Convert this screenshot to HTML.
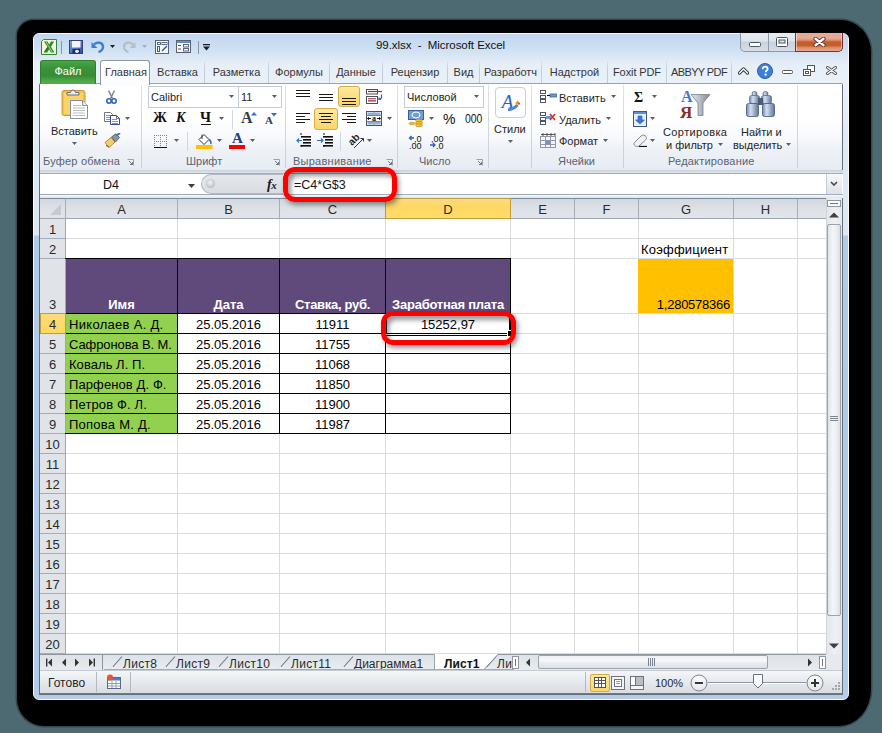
<!DOCTYPE html>
<html><head><meta charset="utf-8">
<style>
*{margin:0;padding:0;box-sizing:border-box}
html,body{width:882px;height:733px;overflow:hidden}
body{background:#4d6a72;position:relative;font-family:"Liberation Sans",sans-serif;color:#1e1e1e}
.a{position:absolute;display:block}
.t{position:absolute;white-space:nowrap;line-height:1}
</style></head><body>
<div class="a" style="left:17px;top:20px;width:854px;height:706px;background:#000;border-radius:16px 30px 32px 27px / 16px 32px 37px 27px;box-shadow:0 0 0 1.5px rgba(0,0,0,.3)"></div>
<div class="a" style="left:33px;top:33px;width:816px;height:667px;border-radius:6px;background:linear-gradient(180deg,#c3d6ee 0px,#cddff2 14px,#d9e6f4 22px,#e6eef8 30px,#eaf1f9 51px,#dfe9f4 120px,#dde8f3 201px,#afcbe8 202px,#b3cde9 100%);border:1px solid #f4f8fc"></div>
<div class="t" style="left:376px;top:40px;font-size:11.5px;color:#111;letter-spacing:-0.05px">99.xlsx&nbsp; -&nbsp; Microsoft Excel</div>
<svg class="a" style="left:41px;top:39px;" width="16" height="16" viewBox="0 0 16 16"><path d="M2.5 0.5H15.5V15.5H0.5V2.5Z" fill="#f6f2d2" stroke="#2c8a34"/><rect x="9" y="2" width="5.5" height="12" fill="#fbfbf4"/><path d="M3 2.5h3.6l1.6 3 1.7-3h3.3l-3.2 5.3 3.4 5.7H9.8L8.1 10.3 6.2 13.5H2.8l3.6-5.7z" fill="#2d8a2f"/><path d="M5.2 3.2l5.8 9.6" stroke="#8fd46a" stroke-width="1.1"/><path d="M3.6 13l3-4.6" stroke="#1d5e22" stroke-width=".8"/></svg>
<div class="a" style="left:61px;top:41px;width:1px;height:13px;background:#8a96a6"></div>
<svg class="a" style="left:69px;top:40px;" width="14" height="14" viewBox="0 0 14 14"><defs><linearGradient id="sv" x1="0" y1="0" x2="1" y2="1"><stop offset="0" stop-color="#7aa6e8"/><stop offset="1" stop-color="#2a4a9c"/></linearGradient></defs><rect x="0.5" y="0.5" width="13" height="13" fill="url(#sv)" stroke="#3a3f78"/><rect x="3" y="1" width="8.5" height="6.5" fill="#f2f5f9"/><rect x="3.5" y="9" width="7.5" height="4.5" fill="#202c5a"/><ellipse cx="8" cy="11.3" rx="2" ry="1.6" fill="#e8ecf2"/></svg>
<svg class="a" style="left:91px;top:40px;" width="14" height="13" viewBox="0 0 14 13"><path d="M3 4.5C6 1.5 11.5 2 12 6.5 12.3 9.5 9.5 11.5 7.5 12" fill="none" stroke="#3b7fd0" stroke-width="2.4"/><path d="M0.5 2v6h6z" fill="#3b7fd0"/></svg>
<svg class="a" style="left:110px;top:45px;" width="5" height="3" viewBox="0 0 5 3"><path d="M0 0H5L2.5 3Z" fill="#1e1e1e"/></svg>
<svg class="a" style="left:123px;top:40px;" width="13" height="13" viewBox="0 0 13 13"><path d="M10 4.5C7 1.5 1.5 2 1 6.5 .7 9.5 3.5 11.5 5.5 12" fill="none" stroke="#b9bec6" stroke-width="2.4"/><path d="M12.5 2v6h-6z" fill="#b9bec6"/></svg>
<svg class="a" style="left:142px;top:45px;" width="5" height="3" viewBox="0 0 5 3"><path d="M0 0H5L2.5 3Z" fill="#a9aeb6"/></svg>
<svg class="a" style="left:155px;top:40px;" width="14" height="14" viewBox="0 0 14 14"><rect x="0.5" y="0.5" width="13" height="13" fill="#f7f8fa" stroke="#5a6170"/><rect x="2.5" y="2.5" width="3" height="2" fill="none" stroke="#5b6a82"/><rect x="7" y="2.5" width="5" height="2" fill="none" stroke="#5b6a82"/><rect x="2.5" y="6.5" width="2" height="5" fill="none" stroke="#3e5e9e"/><path d="M7 11l5-5" stroke="#2a5db0" stroke-width="1.4"/></svg>
<svg class="a" style="left:176px;top:40px;" width="15" height="13" viewBox="0 0 15 13"><rect x="0.5" y="0.5" width="14" height="12" fill="#f7f8fa" stroke="#5a6170"/><rect x="1" y="1" width="13" height="2" fill="#5f8fd8"/><path d="M2 5.5h3M2 9h3" stroke="#8a3a4a"/><rect x="7.5" y="4.5" width="5" height="2.5" fill="none" stroke="#5b6a82"/><rect x="7.5" y="8.5" width="5" height="2.5" fill="none" stroke="#5b6a82"/></svg>
<div class="a" style="left:198px;top:41px;width:1px;height:13px;background:#8a96a6"></div>
<svg class="a" style="left:203px;top:44px;" width="7" height="7" viewBox="0 0 7 7"><rect x="0" y="0" width="7" height="1.3" fill="#1e1e1e"/><path d="M0 2.5H7L3.5 6.5Z" fill="#1e1e1e"/></svg>
<div class="a" style="left:740px;top:33px;width:103px;height:19px;border:1px solid #8b9aac;border-top:none;border-radius:0 0 5px 5px;background:linear-gradient(180deg,#e6ecf3 0%,#dde4ec 45%,#c9d2dc 50%,#d6dde6 100%);overflow:hidden"></div>
<div class="a" style="left:768px;top:33px;width:1px;height:18px;background:#8b9aac"></div>
<div class="a" style="left:795px;top:33px;width:48px;height:19px;border:1px solid #7e2e34;border-top:none;border-radius:0 0 5px 0;background:linear-gradient(180deg,#e8ac9c 0%,#e6a692 30%,#d9906e 40%,#c65a2c 50%,#c4602e 70%,#d88a66 80%,#e6aa92 100%);box-shadow:inset 1px 0 0 rgba(255,255,255,.5),inset -1px 0 0 rgba(255,255,255,.4)"></div>
<svg class="a" style="left:749px;top:42px;" width="12" height="5" viewBox="0 0 12 5"><rect x="0.5" y="0.5" width="11" height="4" rx="1" fill="#fff" stroke="#4b5563"/></svg>
<svg class="a" style="left:776px;top:37px;" width="12" height="10" viewBox="0 0 12 10"><rect x="0.5" y="0.5" width="11" height="9" rx="1" fill="#fff" stroke="#4b5563"/><rect x="3" y="3" width="6" height="3" fill="#dfe4ea" stroke="#4b5563" stroke-width="1"/></svg>
<svg class="a" style="left:813px;top:37px;" width="13" height="10" viewBox="0 0 13 10"><path d="M2.5 1.8L10.5 8.2M10.5 1.8L2.5 8.2" stroke="#5a3028" stroke-width="4.2" stroke-linecap="round"/><path d="M2.5 1.8L10.5 8.2M10.5 1.8L2.5 8.2" stroke="#fff" stroke-width="2.4" stroke-linecap="round"/></svg>
<svg class="a" style="left:738px;top:67px;" width="11" height="8" viewBox="0 0 11 8"><path d="M1.5 6L5.5 2 9.5 6" fill="none" stroke="#3a3f46" stroke-width="3.2" stroke-linejoin="round" stroke-linecap="round"/><path d="M1.5 6L5.5 2 9.5 6" fill="none" stroke="#fff" stroke-width="1.3" stroke-linejoin="round" stroke-linecap="round"/></svg>
<svg class="a" style="left:757px;top:63px;" width="16" height="16" viewBox="0 0 16 16"><circle cx="8" cy="8" r="7.5" fill="#3d7fd4"/><circle cx="8" cy="8" r="7.5" fill="none" stroke="#2a62b0" stroke-width="1"/><path d="M5.6 6.2C5.6 4.6 6.7 3.7 8.1 3.7 9.6 3.7 10.6 4.6 10.6 5.9 10.6 7.4 8.6 7.6 8.6 9.3" fill="none" stroke="#fff" stroke-width="1.8"/><rect x="7.6" y="10.6" width="2" height="2" fill="#fff"/></svg>
<svg class="a" style="left:782px;top:70px;" width="11" height="4" viewBox="0 0 11 4"><rect x="0.5" y="0.5" width="10" height="3" rx="1" fill="#fff" stroke="#555"/></svg>
<svg class="a" style="left:803px;top:65px;" width="12" height="11" viewBox="0 0 12 11"><rect x="4.5" y="0.5" width="7" height="6" fill="#fff" stroke="#555"/><rect x="0.5" y="4.5" width="7" height="6" fill="#fff" stroke="#555"/><rect x="2.5" y="6.5" width="3" height="2" fill="none" stroke="#555"/></svg>
<svg class="a" style="left:826px;top:66px;" width="11" height="9" viewBox="0 0 11 9"><path d="M1.5 1.5L9.5 7.5M9.5 1.5L1.5 7.5" stroke="#555" stroke-width="3" stroke-linecap="round"/><path d="M1.5 1.5L9.5 7.5M9.5 1.5L1.5 7.5" stroke="#fff" stroke-width="1.2" stroke-linecap="round"/></svg>
<div class="a" style="left:39px;top:83px;width:804px;height:612px;border:1px solid #666e7a;border-top-color:#9aa3ae;border-radius:2px 2px 0 0;background:#e6ebf1"></div>
<div class="a" style="left:40px;top:84px;width:802px;height:85px;background:linear-gradient(180deg,#ffffff 0px,#ffffff 34px,#f6f8fb 56px,#eef2f7 64px,#e8edf4 84px)"></div>
<div class="a" style="left:141px;top:85px;width:1px;height:83px;background:linear-gradient(180deg,#dfe4ea,#cfd6de 50%,#c9d0d9)"></div>
<div class="a" style="left:285px;top:85px;width:1px;height:83px;background:linear-gradient(180deg,#dfe4ea,#cfd6de 50%,#c9d0d9)"></div>
<div class="a" style="left:397px;top:85px;width:1px;height:83px;background:linear-gradient(180deg,#dfe4ea,#cfd6de 50%,#c9d0d9)"></div>
<div class="a" style="left:488px;top:85px;width:1px;height:83px;background:linear-gradient(180deg,#dfe4ea,#cfd6de 50%,#c9d0d9)"></div>
<div class="a" style="left:531px;top:85px;width:1px;height:83px;background:linear-gradient(180deg,#dfe4ea,#cfd6de 50%,#c9d0d9)"></div>
<div class="a" style="left:623px;top:85px;width:1px;height:83px;background:linear-gradient(180deg,#dfe4ea,#cfd6de 50%,#c9d0d9)"></div>
<div class="a" style="left:797px;top:85px;width:1px;height:83px;background:linear-gradient(180deg,#dfe4ea,#cfd6de 50%,#c9d0d9)"></div>
<div class="t" style="left:43px;top:156px;font-size:11px;color:#5c5f72;letter-spacing:0.2px">Буфер обмена</div>
<div class="t" style="left:186px;top:156px;font-size:11px;color:#5c5f72">Шрифт</div>
<div class="t" style="left:293px;top:156px;font-size:11px;color:#5c5f72;letter-spacing:0.25px">Выравнивание</div>
<div class="t" style="left:419px;top:156px;font-size:11px;color:#5c5f72">Число</div>
<div class="t" style="left:558px;top:156px;font-size:11px;color:#5c5f72">Ячейки</div>
<div class="t" style="left:668px;top:156px;font-size:11px;color:#5c5f72;letter-spacing:0.2px">Редактирование</div>
<svg class="a" style="left:127px;top:159px;" width="7" height="7" viewBox="0 0 7 7"><path d="M0.5 0.5H6.5V6.5" fill="none" stroke="#98a2ae"/><path d="M0.5 0.5V6.5H6.5" fill="none" stroke="#c4cbd4" stroke-opacity=".0"/><path d="M2 2L5.5 5.5M5.5 3V5.5H3" fill="none" stroke="#6f7a88"/></svg>
<svg class="a" style="left:273px;top:159px;" width="7" height="7" viewBox="0 0 7 7"><path d="M0.5 0.5H6.5V6.5" fill="none" stroke="#98a2ae"/><path d="M0.5 0.5V6.5H6.5" fill="none" stroke="#c4cbd4" stroke-opacity=".0"/><path d="M2 2L5.5 5.5M5.5 3V5.5H3" fill="none" stroke="#6f7a88"/></svg>
<svg class="a" style="left:386px;top:159px;" width="7" height="7" viewBox="0 0 7 7"><path d="M0.5 0.5H6.5V6.5" fill="none" stroke="#98a2ae"/><path d="M0.5 0.5V6.5H6.5" fill="none" stroke="#c4cbd4" stroke-opacity=".0"/><path d="M2 2L5.5 5.5M5.5 3V5.5H3" fill="none" stroke="#6f7a88"/></svg>
<svg class="a" style="left:476px;top:159px;" width="7" height="7" viewBox="0 0 7 7"><path d="M0.5 0.5H6.5V6.5" fill="none" stroke="#98a2ae"/><path d="M0.5 0.5V6.5H6.5" fill="none" stroke="#c4cbd4" stroke-opacity=".0"/><path d="M2 2L5.5 5.5M5.5 3V5.5H3" fill="none" stroke="#6f7a88"/></svg>
<svg class="a" style="left:61px;top:88px;" width="28" height="31" viewBox="0 0 28 31"><rect x="1" y="2.5" width="23" height="25" rx="2" fill="#f4c14e" stroke="#cf9a36"/><rect x="3" y="5" width="19" height="21" fill="#f9d36c"/><path d="M6 7V4.5H9.5A2.5 2.5 0 0 1 14.5 4.5H18V7Z" fill="#e9ecf0" stroke="#6c6f76"/><path d="M9.5 12.5H21.5L26.5 17.5V30.5H9.5Z" fill="#fff" stroke="#8a8f98"/><path d="M21.5 12.5V17.5H26.5" fill="#e8ebef" stroke="#8a8f98"/><path d="M12 17.5h8M12 20h12M12 22.5h12M12 25h12M12 27.5h12" stroke="#a7adb6" stroke-width="0.8"/></svg>
<div class="t" style="left:51px;top:126px;font-size:11px;color:#262626">Вставить</div>
<svg class="a" style="left:72px;top:142px;" width="5" height="3" viewBox="0 0 5 3"><path d="M0 0H5L2.5 3Z" fill="#56606c"/></svg>
<svg class="a" style="left:106px;top:90px;" width="11" height="14" viewBox="0 0 11 14"><path d="M2.5 0.5L6.5 8.5M8.5 0.5L4.5 8.5" stroke="#7d838c" stroke-width="1.5"/><circle cx="3" cy="11" r="2.2" fill="none" stroke="#2d62c4" stroke-width="1.6"/><circle cx="8" cy="11" r="2.2" fill="none" stroke="#2d62c4" stroke-width="1.6"/></svg>
<svg class="a" style="left:104px;top:112px;" width="16" height="13" viewBox="0 0 16 13"><path d="M0.5 0.5H6.5L8.5 2.5V9.5H0.5Z" fill="#fff" stroke="#6b7a90"/><path d="M2 3.5h4M2 5.5h4M2 7.5h4" stroke="#4a7fd0" stroke-width=".8"/><path d="M6.5 3.5H12.5L15.5 6.5V12.5H6.5Z" fill="#fff" stroke="#2f4f8f"/><path d="M12.5 3.5V6.5H15.5" fill="none" stroke="#2f4f8f" stroke-width=".8"/><path d="M8 7.5h5M8 9.5h6M8 11.5h6" stroke="#4a7fd0" stroke-width=".8"/></svg>
<svg class="a" style="left:125px;top:117px;" width="5" height="3" viewBox="0 0 5 3"><path d="M0 0H5L2.5 3Z" fill="#56606c"/></svg>
<svg class="a" style="left:104px;top:133px;" width="17" height="15" viewBox="0 0 17 15"><path d="M1 9.5L7 4.5 11 9 5 14.5Z" fill="#f2cd6a" stroke="#b98c38"/><path d="M7.5 4L12 0.8 15.5 4.5 11.5 9Z" fill="#8b93a0" stroke="#5d6674"/><path d="M12.5 2.5L16 0" stroke="#3b6fc0" stroke-width="2"/><path d="M2 12.5L5 14" stroke="#7a5a20"/></svg>
<div class="a" style="left:148px;top:86px;width:91px;height:22px;background:#fff;border:1px solid #c3cbd6"></div>
<div class="a" style="left:238px;top:86px;width:44px;height:22px;background:#fff;border:1px solid #c3cbd6"></div>
<div class="t" style="left:151px;top:92px;font-size:11px;color:#262626">Calibri</div>
<div class="t" style="left:241px;top:92px;font-size:11px;color:#262626">11</div>
<svg class="a" style="left:229px;top:95px;" width="5" height="3" viewBox="0 0 5 3"><path d="M0 0H5L2.5 3Z" fill="#56606c"/></svg>
<svg class="a" style="left:272px;top:95px;" width="5" height="3" viewBox="0 0 5 3"><path d="M0 0H5L2.5 3Z" fill="#56606c"/></svg>
<div class="t" style="left:153px;top:111px;font-family:'Liberation Serif',serif;font-weight:bold;font-size:14px;color:#111">Ж</div>
<div class="t" style="left:176px;top:111px;font-family:'Liberation Serif',serif;font-weight:bold;font-style:italic;font-size:14px;color:#111">К</div>
<div class="t" style="left:200px;top:110px;font-family:'Liberation Serif',serif;font-weight:bold;font-size:15px;color:#111">Ч</div>
<div class="a" style="left:201px;top:124px;width:10px;height:1px;background:#111"></div>
<svg class="a" style="left:219px;top:117px;" width="5" height="3" viewBox="0 0 5 3"><path d="M0 0H5L2.5 3Z" fill="#56606c"/></svg>
<div class="a" style="left:232px;top:110px;width:1px;height:19px;background:#d0d6de"></div>
<div class="t" style="left:241px;top:110px;font-family:'Liberation Serif',serif;font-weight:bold;font-size:16px;color:#333c48">A</div>
<svg class="a" style="left:251px;top:112px;" width="6" height="4" viewBox="0 0 6 4"><path d="M0 3.5H6L3 0Z" fill="#2f6fcf"/></svg>
<div class="t" style="left:265px;top:115px;font-family:'Liberation Serif',serif;font-weight:bold;font-size:11px;color:#333c48">A</div>
<svg class="a" style="left:271px;top:113px;" width="6" height="4" viewBox="0 0 6 4"><path d="M0 0H6L3 3.5Z" fill="#2f6fcf"/></svg>
<svg class="a" style="left:154px;top:135px;" width="13" height="13" viewBox="0 0 13 13"><rect x="0" y="0" width="1" height="1" fill="#7d848e"/><rect x="0" y="6" width="1" height="1" fill="#7d848e"/><rect x="2" y="0" width="1" height="1" fill="#7d848e"/><rect x="2" y="6" width="1" height="1" fill="#7d848e"/><rect x="4" y="0" width="1" height="1" fill="#7d848e"/><rect x="4" y="6" width="1" height="1" fill="#7d848e"/><rect x="6" y="0" width="1" height="1" fill="#7d848e"/><rect x="6" y="6" width="1" height="1" fill="#7d848e"/><rect x="8" y="0" width="1" height="1" fill="#7d848e"/><rect x="8" y="6" width="1" height="1" fill="#7d848e"/><rect x="10" y="0" width="1" height="1" fill="#7d848e"/><rect x="10" y="6" width="1" height="1" fill="#7d848e"/><rect x="12" y="0" width="1" height="1" fill="#7d848e"/><rect x="12" y="6" width="1" height="1" fill="#7d848e"/><rect x="0" y="2" width="1" height="1" fill="#7d848e"/><rect x="0" y="4" width="1" height="1" fill="#7d848e"/><rect x="0" y="6" width="1" height="1" fill="#7d848e"/><rect x="0" y="8" width="1" height="1" fill="#7d848e"/><rect x="0" y="10" width="1" height="1" fill="#7d848e"/><rect x="6" y="2" width="1" height="1" fill="#7d848e"/><rect x="6" y="4" width="1" height="1" fill="#7d848e"/><rect x="6" y="6" width="1" height="1" fill="#7d848e"/><rect x="6" y="8" width="1" height="1" fill="#7d848e"/><rect x="6" y="10" width="1" height="1" fill="#7d848e"/><rect x="12" y="2" width="1" height="1" fill="#7d848e"/><rect x="12" y="4" width="1" height="1" fill="#7d848e"/><rect x="12" y="6" width="1" height="1" fill="#7d848e"/><rect x="12" y="8" width="1" height="1" fill="#7d848e"/><rect x="12" y="10" width="1" height="1" fill="#7d848e"/><rect x="0" y="12" width="13" height="1.2" fill="#111"/></svg>
<svg class="a" style="left:174px;top:139px;" width="5" height="3" viewBox="0 0 5 3"><path d="M0 0H5L2.5 3Z" fill="#56606c"/></svg>
<div class="a" style="left:187px;top:132px;width:1px;height:19px;background:#d0d6de"></div>
<svg class="a" style="left:196px;top:133px;" width="17" height="16" viewBox="0 0 17 16"><path d="M3 6.5L8 1.5 13 6.5 8 11.5Z" fill="#fff" stroke="#333"/><path d="M6 1.5V6" stroke="#333"/><path d="M13 6.5C15 8 15.5 10 14.5 11" fill="none" stroke="#2e6fd2" stroke-width="1.6"/><rect x="0" y="12" width="16.5" height="4" fill="#ffc000"/></svg>
<svg class="a" style="left:217px;top:139px;" width="5" height="3" viewBox="0 0 5 3"><path d="M0 0H5L2.5 3Z" fill="#56606c"/></svg>
<div class="t" style="left:232px;top:131px;font-family:'Liberation Serif',serif;font-weight:bold;font-size:15px;color:#1f3e8c">A</div>
<div class="a" style="left:229px;top:145px;width:16px;height:4px;background:#f00"></div>
<svg class="a" style="left:250px;top:139px;" width="5" height="3" viewBox="0 0 5 3"><path d="M0 0H5L2.5 3Z" fill="#56606c"/></svg>
<div class="a" style="left:338px;top:86px;width:22px;height:21px;background:linear-gradient(180deg,#fde9a2,#fbd566);border:1px solid #d6ab4c;border-radius:3px"></div>
<div class="a" style="left:314px;top:108px;width:24px;height:22px;background:linear-gradient(180deg,#fde9a2,#fbd566);border:1px solid #d6ab4c;border-radius:3px"></div>
<svg class="a" style="left:296px;top:89px;" width="14" height="10" viewBox="0 0 14 10"><rect x="0" y="1" width="14" height="1" fill="#1a1a1a"/><rect x="0" y="4" width="14" height="1" fill="#1a1a1a"/><rect x="0" y="7" width="14" height="1" fill="#1a1a1a"/></svg>
<svg class="a" style="left:319px;top:93px;" width="14" height="10" viewBox="0 0 14 10"><rect x="0" y="1" width="14" height="1" fill="#1a1a1a"/><rect x="0" y="4" width="14" height="1" fill="#1a1a1a"/><rect x="0" y="7" width="14" height="1" fill="#1a1a1a"/></svg>
<svg class="a" style="left:342px;top:97px;" width="14" height="10" viewBox="0 0 14 10"><rect x="0" y="1" width="14" height="1" fill="#1a1a1a"/><rect x="0" y="4" width="14" height="1" fill="#1a1a1a"/><rect x="0" y="7" width="14" height="1" fill="#1a1a1a"/></svg>
<svg class="a" style="left:296px;top:112px;" width="14" height="12" viewBox="0 0 14 12"><rect x="0" y="1" width="14" height="1" fill="#1a1a1a"/><rect x="0" y="4" width="9" height="1" fill="#1a1a1a"/><rect x="0" y="7" width="14" height="1" fill="#1a1a1a"/><rect x="0" y="10" width="9" height="1" fill="#1a1a1a"/></svg>
<svg class="a" style="left:319px;top:112px;" width="14" height="12" viewBox="0 0 14 12"><rect x="0" y="1" width="14" height="1" fill="#1a1a1a"/><rect x="2" y="4" width="10" height="1" fill="#1a1a1a"/><rect x="0" y="7" width="14" height="1" fill="#1a1a1a"/><rect x="2" y="10" width="10" height="1" fill="#1a1a1a"/></svg>
<svg class="a" style="left:342px;top:112px;" width="14" height="12" viewBox="0 0 14 12"><rect x="0" y="1" width="14" height="1" fill="#1a1a1a"/><rect x="5" y="4" width="9" height="1" fill="#1a1a1a"/><rect x="0" y="7" width="14" height="1" fill="#1a1a1a"/><rect x="5" y="10" width="9" height="1" fill="#1a1a1a"/></svg>
<svg class="a" style="left:366px;top:89px;" width="17" height="15" viewBox="0 0 17 15"><rect x="0.5" y="0.5" width="11" height="4.5" fill="#fff" stroke="#4a4f58"/><path d="M2 2.5H16" stroke="#9a2a3a" stroke-width="1.2"/><rect x="0.5" y="7.5" width="11" height="7" fill="#fff" stroke="#4a4f58"/><path d="M2 9.7H10M2 11.9H10" stroke="#9a2a3a" stroke-width="1.1"/><path d="M15.5 5.5V9L13 10.5M13 8.5V10.5H15" fill="none" stroke="#2e5fb8" stroke-width="1.2"/></svg>
<svg class="a" style="left:366px;top:111px;" width="16" height="15" viewBox="0 0 16 15"><rect x="0.5" y="0.5" width="15" height="14" fill="#fff" stroke="#4a4f58"/><rect x="1.5" y="1.5" width="6" height="2.5" fill="#8fb0dc"/><rect x="8.5" y="1.5" width="6" height="2.5" fill="#8fb0dc"/><rect x="1.5" y="11" width="6" height="2.5" fill="#8fb0dc"/><rect x="8.5" y="11" width="6" height="2.5" fill="#8fb0dc"/><path d="M0.5 4.5H15.5M0.5 10.5H15.5M8 0.5V4.5M8 10.5V14.5" stroke="#7a8592"/><text x="8" y="10" font-size="8" font-family="Liberation Serif" font-weight="bold" text-anchor="middle" fill="#111">a</text><path d="M1.5 7.5H5M11 7.5H14.5" stroke="#111" stroke-width="1.2"/><path d="M1 7.5L3 5.8V9.2Z M15 7.5L13 5.8V9.2Z" fill="#111"/></svg>
<svg class="a" style="left:387px;top:117px;" width="5" height="3" viewBox="0 0 5 3"><path d="M0 0H5L2.5 3Z" fill="#56606c"/></svg>
<svg class="a" style="left:296px;top:133px;" width="16" height="15" viewBox="0 0 16 15"><path d="M4 1h2M4 13h2" stroke="#111"/><rect x="5" y="3" width="10" height="1.6" fill="#111"/><rect x="7" y="6" width="8" height="1.6" fill="#111"/><rect x="7" y="9" width="8" height="1.6" fill="#111"/><rect x="5" y="12" width="10" height="1.6" fill="#111"/><path d="M6 7.5H1M3 5.5L1 7.5 3 9.5" fill="none" stroke="#2e6fd2" stroke-width="1.2"/></svg>
<svg class="a" style="left:317px;top:133px;" width="16" height="15" viewBox="0 0 16 15"><path d="M6 1h2M6 13h2" stroke="#111"/><rect x="6" y="3" width="10" height="1.6" fill="#111"/><rect x="8" y="6" width="8" height="1.6" fill="#111"/><rect x="8" y="9" width="8" height="1.6" fill="#111"/><rect x="6" y="12" width="10" height="1.6" fill="#111"/><path d="M0 7.5H6M4 5.5L6 7.5 4 9.5" fill="none" stroke="#2e6fd2" stroke-width="1.2"/></svg>
<div class="a" style="left:340px;top:132px;width:1px;height:19px;background:#d0d6de"></div>
<svg class="a" style="left:349px;top:133px;" width="17" height="16" viewBox="0 0 17 16"><text x="0" y="0" font-size="10" font-family="Liberation Sans" font-weight="bold" fill="#222" transform="translate(3,13) rotate(-45)">ab</text><path d="M5 15L14 6M11.5 5.5H14.5V8.5" fill="none" stroke="#333"/></svg>
<svg class="a" style="left:367px;top:139px;" width="5" height="3" viewBox="0 0 5 3"><path d="M0 0H5L2.5 3Z" fill="#56606c"/></svg>
<div class="a" style="left:404px;top:86px;width:80px;height:22px;background:#fff;border:1px solid #c3cbd6"></div>
<div class="t" style="left:407px;top:92px;font-size:11px;color:#262626">Числовой</div>
<svg class="a" style="left:474px;top:95px;" width="5" height="3" viewBox="0 0 5 3"><path d="M0 0H5L2.5 3Z" fill="#56606c"/></svg>
<svg class="a" style="left:408px;top:110px;" width="17" height="17" viewBox="0 0 17 17"><rect x="0.5" y="0.5" width="15" height="9" fill="#6f9ed8" stroke="#3a5e98"/><ellipse cx="8" cy="5" rx="4" ry="3" fill="none" stroke="#fff" stroke-width="1"/><ellipse cx="11" cy="10.5" rx="3.5" ry="1.5" fill="#f2c12e" stroke="#b98716" stroke-width=".6"/><ellipse cx="11" cy="13" rx="3.5" ry="1.5" fill="#f2c12e" stroke="#b98716" stroke-width=".6"/><ellipse cx="11" cy="15.3" rx="3.5" ry="1.5" fill="#f2c12e" stroke="#b98716" stroke-width=".6"/><ellipse cx="4" cy="13.5" rx="3" ry="1.3" fill="#f2c12e" stroke="#b98716" stroke-width=".6"/></svg>
<svg class="a" style="left:429px;top:117px;" width="5" height="3" viewBox="0 0 5 3"><path d="M0 0H5L2.5 3Z" fill="#56606c"/></svg>
<div class="t" style="left:443px;top:112px;font-size:14px;color:#111">%</div>
<div class="t" style="left:465px;top:112px;font-size:13px;color:#111;transform:scaleX(.8);transform-origin:0 0">000</div>
<svg class="a" style="left:408px;top:134px;" width="17" height="15" viewBox="0 0 17 15"><path d="M6 4H1.5M3.5 2L1.5 4 3.5 6" fill="none" stroke="#2e5fb8" stroke-width="1.3"/><text x="6" y="7.5" font-size="9" font-family="Liberation Sans" fill="#111">,0</text><text x="1" y="14.5" font-size="9" font-family="Liberation Sans" fill="#111">,00</text></svg>
<svg class="a" style="left:430px;top:134px;" width="17" height="15" viewBox="0 0 17 15"><text x="1" y="7.5" font-size="9" font-family="Liberation Sans" fill="#111">,00</text><path d="M0 11H5M3 9L5 11 3 13" fill="none" stroke="#2e5fb8" stroke-width="1.3"/><text x="6" y="14.5" font-size="9" font-family="Liberation Sans" fill="#111">,0</text></svg>
<div class="a" style="left:495px;top:87px;width:31px;height:31px;border:1px solid #c9d0da;border-radius:4px;background:#fcfdfe"></div>
<div class="t" style="left:502px;top:93px;font-family:'Liberation Serif',serif;font-style:italic;font-size:18px;color:#2f5fb8;transform:scaleX(1.05)">A</div>
<svg class="a" style="left:506px;top:100px;" width="14" height="11" viewBox="0 0 14 11"><path d="M2 10C5 9.5 9 8 11.5 5" stroke="#4f86d8" stroke-width="3" fill="none"/><path d="M10 4L12.5 1.5" stroke="#e8a020" stroke-width="2.5"/><path d="M12.5 4.5L13.5 3" stroke="#c03020" stroke-width="1.5"/></svg>
<div class="t" style="left:494px;top:124px;font-size:11px;color:#262626">Стили</div>
<svg class="a" style="left:508px;top:140px;" width="5" height="3" viewBox="0 0 5 3"><path d="M0 0H5L2.5 3Z" fill="#56606c"/></svg>
<svg class="a" style="left:540px;top:90px;" width="17" height="14" viewBox="0 0 17 14"><rect x="0.5" y="0.5" width="5" height="3" fill="#fff" stroke="#4b5a70"/><rect x="0.5" y="5.5" width="5" height="3" fill="#fff" stroke="#4b5a70"/><rect x="0.5" y="9.5" width="5" height="3" fill="#fff" stroke="#4b5a70"/><rect x="10" y="4" width="6.5" height="3" fill="#6a9ad8" stroke="#3b5f98" stroke-width=".8"/><path d="M7 5.5H10" stroke="#111"/></svg>
<div class="t" style="left:559px;top:93px;font-size:11px;color:#262626">Вставить</div>
<svg class="a" style="left:611px;top:95px;" width="5" height="3" viewBox="0 0 5 3"><path d="M0 0H5L2.5 3Z" fill="#56606c"/></svg>
<svg class="a" style="left:540px;top:112px;" width="17" height="13" viewBox="0 0 17 13"><rect x="0.5" y="0.5" width="5" height="3" fill="#fff" stroke="#4b5a70"/><rect x="0.5" y="5.5" width="5" height="3" fill="#fff" stroke="#4b5a70"/><rect x="0.5" y="9.5" width="5" height="3" fill="#fff" stroke="#4b5a70"/><rect x="6" y="4" width="5" height="3" fill="#6a9ad8"/><path d="M10 2L15 8M15 2L10 8" stroke="#d8281a" stroke-width="1.5"/></svg>
<div class="t" style="left:559px;top:115px;font-size:11px;color:#262626">Удалить</div>
<svg class="a" style="left:606px;top:117px;" width="5" height="3" viewBox="0 0 5 3"><path d="M0 0H5L2.5 3Z" fill="#56606c"/></svg>
<svg class="a" style="left:540px;top:133px;" width="17" height="16" viewBox="0 0 17 16"><path d="M1 1.5H15M3 0V3M7 0V3M11 0V3M15 0V3" stroke="#333" stroke-width=".8"/><rect x="0.5" y="3.5" width="15" height="11" fill="#f4f6f9" stroke="#8e98a6"/><path d="M0.5 7.5H15.5M0.5 11.5H15.5M5.5 3.5V14.5M10.5 3.5V14.5" stroke="#8e98a6"/><rect x="6" y="8" width="4" height="3" fill="#5d95dc"/></svg>
<div class="t" style="left:559px;top:136px;font-size:11px;color:#262626">Формат</div>
<svg class="a" style="left:603px;top:139px;" width="5" height="3" viewBox="0 0 5 3"><path d="M0 0H5L2.5 3Z" fill="#56606c"/></svg>
<div class="t" style="left:634px;top:91px;font-family:'Liberation Serif',serif;font-weight:bold;font-size:14px;color:#111">Σ</div>
<svg class="a" style="left:652px;top:95px;" width="5" height="3" viewBox="0 0 5 3"><path d="M0 0H5L2.5 3Z" fill="#56606c"/></svg>
<svg class="a" style="left:633px;top:111px;" width="14" height="16" viewBox="0 0 14 16"><rect x="0.5" y="0.5" width="13" height="15" fill="#e4edf8" stroke="#3e5a88"/><rect x="1" y="1" width="12" height="2" fill="#5b8fd6"/><path d="M5 5H9V9H11.5L7 13 2.5 9H5Z" fill="#3a78d4" stroke="#2a5aa8" stroke-width=".6"/></svg>
<svg class="a" style="left:650px;top:117px;" width="5" height="3" viewBox="0 0 5 3"><path d="M0 0H5L2.5 3Z" fill="#56606c"/></svg>
<svg class="a" style="left:633px;top:134px;" width="15" height="13" viewBox="0 0 15 13"><path d="M1.5 8.5L8 2C9.5 0.5 12 1 13 2.5 13.8 3.7 13.5 5 12.5 6L6 12C4.5 13 2.5 12.5 1.5 11.2 0.8 10.2 0.8 9.2 1.5 8.5Z" fill="#f0f2f5" stroke="#7f8794"/><path d="M6 12.5H14" stroke="#111" stroke-width="1.2"/></svg>
<svg class="a" style="left:650px;top:139px;" width="5" height="3" viewBox="0 0 5 3"><path d="M0 0H5L2.5 3Z" fill="#56606c"/></svg>
<svg class="a" style="left:690px;top:94px;" width="21" height="23" viewBox="0 0 21 23"><defs><linearGradient id="fg" x1="0" y1="0" x2="1" y2="0"><stop offset="0" stop-color="#e8eaee"/><stop offset=".5" stop-color="#b4bac3"/><stop offset="1" stop-color="#7d848f"/></linearGradient></defs><path d="M1 0.5H20L13 9V21.5H8V9Z" fill="url(#fg)" stroke="#7a818c" stroke-width=".8"/></svg>
<div class="t" style="left:681px;top:89px;font-family:'Liberation Serif',serif;font-weight:bold;font-size:16px;color:#4677c8">A</div>
<div class="t" style="left:680px;top:104px;font-family:'Liberation Serif',serif;font-weight:bold;font-size:17px;color:#8a2b24">Я</div>
<div class="t" style="left:663px;top:127px;font-size:11px;color:#262626;letter-spacing:0.4px">Сортировка</div>
<div class="t" style="left:666px;top:140px;font-size:11px;color:#262626">и фильтр</div>
<svg class="a" style="left:718px;top:143px;" width="5" height="3" viewBox="0 0 5 3"><path d="M0 0H5L2.5 3Z" fill="#56606c"/></svg>
<svg class="a" style="left:746px;top:91px;" width="29" height="26" viewBox="0 0 29 26"><defs><linearGradient id="bg1" x1="0" y1="0" x2="1" y2="0"><stop offset="0" stop-color="#7088ae"/><stop offset=".35" stop-color="#d4e0f0"/><stop offset="1" stop-color="#5d7398"/></linearGradient></defs><rect x="6" y="0.5" width="5" height="4.5" rx="2" fill="url(#bg1)" stroke="#56688a" stroke-width=".7"/><rect x="17" y="0.5" width="5" height="4.5" rx="2" fill="url(#bg1)" stroke="#56688a" stroke-width=".7"/><rect x="3.5" y="4.5" width="10" height="8" rx="2" fill="url(#bg1)" stroke="#56688a" stroke-width=".7"/><rect x="15.5" y="4.5" width="10" height="8" rx="2" fill="url(#bg1)" stroke="#56688a" stroke-width=".7"/><rect x="12" y="7" width="5" height="7" fill="#4b5b78"/><rect x="0.5" y="12.5" width="12" height="13" rx="2" fill="url(#bg1)" stroke="#45567a" stroke-width=".8"/><rect x="16.5" y="12.5" width="12" height="13" rx="2" fill="url(#bg1)" stroke="#45567a" stroke-width=".8"/></svg>
<div class="t" style="left:741px;top:127px;font-size:11px;color:#262626">Найти и</div>
<div class="t" style="left:733px;top:140px;font-size:11px;color:#262626">выделить</div>
<svg class="a" style="left:786px;top:143px;" width="5" height="3" viewBox="0 0 5 3"><path d="M0 0H5L2.5 3Z" fill="#56606c"/></svg>
<div class="a" style="left:40px;top:60px;width:56px;height:24px;background:linear-gradient(180deg,#4ba645 0%,#3b9239 30%,#378d37 65%,#4ca746 85%,#55ad4a 100%);border-radius:3px 3px 0 0;border:1px solid #2f7f2f;border-bottom:none"></div>
<div class="t" style="left:40px;top:66px;width:56px;text-align:center;font-size:11px;color:#fff">Файл</div>
<div class="a" style="left:100px;top:60px;width:50px;height:25px;background:linear-gradient(180deg,#ffffff,#fbfcfe);border:1px solid #8f98a3;border-bottom:none;border-radius:3px 3px 0 0"></div>
<div class="t" style="left:101px;top:67px;width:50px;text-align:center;font-size:11px;color:#363636;letter-spacing:0px">Главная</div>
<div class="t" style="left:151px;top:67px;width:53px;text-align:center;font-size:11px;color:#363636;letter-spacing:0px">Вставка</div>
<div class="t" style="left:205px;top:67px;width:63px;text-align:center;font-size:11px;color:#363636;letter-spacing:0px">Разметка</div>
<div class="t" style="left:269px;top:67px;width:60px;text-align:center;font-size:11px;color:#363636;letter-spacing:0px">Формулы</div>
<div class="t" style="left:330px;top:67px;width:52px;text-align:center;font-size:11px;color:#363636;letter-spacing:0px">Данные</div>
<div class="t" style="left:383px;top:67px;width:64px;text-align:center;font-size:11px;color:#363636;letter-spacing:0px">Рецензир</div>
<div class="t" style="left:448px;top:67px;width:31px;text-align:center;font-size:11px;color:#363636;letter-spacing:0px">Вид</div>
<div class="t" style="left:480px;top:67px;width:61px;text-align:center;font-size:11px;color:#363636;letter-spacing:0px">Разработч</div>
<div class="t" style="left:542px;top:67px;width:65px;text-align:center;font-size:11px;color:#363636;letter-spacing:0px">Надстрой</div>
<div class="t" style="left:608px;top:67px;width:58px;text-align:center;font-size:11px;color:#363636;letter-spacing:-0.1px">Foxit PDF</div>
<div class="t" style="left:667px;top:67px;width:64px;text-align:center;font-size:11px;color:#363636;letter-spacing:-0.6px">ABBYY PDF</div>
<div class="a" style="left:204px;top:61px;width:1px;height:22px;background:linear-gradient(180deg,rgba(190,204,220,.3),#c3cdd8 40%,#c3cdd8)"></div>
<div class="a" style="left:268px;top:61px;width:1px;height:22px;background:linear-gradient(180deg,rgba(190,204,220,.3),#c3cdd8 40%,#c3cdd8)"></div>
<div class="a" style="left:329px;top:61px;width:1px;height:22px;background:linear-gradient(180deg,rgba(190,204,220,.3),#c3cdd8 40%,#c3cdd8)"></div>
<div class="a" style="left:382px;top:61px;width:1px;height:22px;background:linear-gradient(180deg,rgba(190,204,220,.3),#c3cdd8 40%,#c3cdd8)"></div>
<div class="a" style="left:447px;top:61px;width:1px;height:22px;background:linear-gradient(180deg,rgba(190,204,220,.3),#c3cdd8 40%,#c3cdd8)"></div>
<div class="a" style="left:479px;top:61px;width:1px;height:22px;background:linear-gradient(180deg,rgba(190,204,220,.3),#c3cdd8 40%,#c3cdd8)"></div>
<div class="a" style="left:541px;top:61px;width:1px;height:22px;background:linear-gradient(180deg,rgba(190,204,220,.3),#c3cdd8 40%,#c3cdd8)"></div>
<div class="a" style="left:607px;top:61px;width:1px;height:22px;background:linear-gradient(180deg,rgba(190,204,220,.3),#c3cdd8 40%,#c3cdd8)"></div>
<div class="a" style="left:666px;top:61px;width:1px;height:22px;background:linear-gradient(180deg,rgba(190,204,220,.3),#c3cdd8 40%,#c3cdd8)"></div>
<div class="a" style="left:731px;top:61px;width:1px;height:22px;background:linear-gradient(180deg,rgba(190,204,220,.3),#c3cdd8 40%,#c3cdd8)"></div>
<div class="a" style="left:40px;top:170px;width:803px;height:3px;background:linear-gradient(180deg,#c9d1dc,#dfe6ee)"></div>
<div class="a" style="left:40px;top:173px;width:803px;height:22px;background:#fff;border-top:1px solid #a3adb9;border-bottom:1px solid #a3adb9"></div>
<div class="a" style="left:40px;top:195px;width:803px;height:3px;background:linear-gradient(180deg,#f5f8fc,#dce6f2)"></div>
<div class="t" style="left:103px;top:179px;font-size:12.5px;color:#141414">D4</div>
<svg class="a" style="left:188px;top:184px;" width="7" height="4" viewBox="0 0 7 4"><path d="M0 0H7L3.5 4Z" fill="#3c3c3c"/></svg>
<div class="a" style="left:201px;top:174px;width:100px;height:20px;border:1px solid #b3bac3;border-right:none;border-radius:10px 0 0 10px;background:linear-gradient(180deg,#e4e7eb,#d9dde2)"></div>
<svg class="a" style="left:205px;top:178px;" width="11" height="11" viewBox="0 0 11 11"><defs><radialGradient id="pg" cx=".45" cy=".4" r=".6"><stop offset="0" stop-color="#f4f5f7"/><stop offset="1" stop-color="#b9bec5"/></radialGradient></defs><circle cx="5.5" cy="5.5" r="4.5" fill="url(#pg)"/></svg>
<div class="t" style="left:267px;top:178px;font-family:'Liberation Serif',serif;font-weight:bold;font-size:14px;color:#1a1a1a;letter-spacing:-0.5px"><i>f</i><i style='font-size:11px'>x</i></div>
<div class="a" style="left:283px;top:174px;width:544px;height:20px;background:#fff"></div>
<div class="t" style="left:294px;top:179px;font-size:12.5px;color:#141414">=C4*G$3</div>
<div class="a" style="left:826px;top:174px;width:16px;height:20px;background:linear-gradient(180deg,#f6f8fb,#dde2e9);border-left:1px solid #c5ccd5"></div>
<svg class="a" style="left:830px;top:181px;" width="8" height="5" viewBox="0 0 8 5"><path d="M1 1L4 4 7 1" fill="none" stroke="#404854" stroke-width="1.6"/></svg>
<div class="a" style="left:40px;top:198px;width:786px;height:21px;background:linear-gradient(180deg,#d3d8de,#dfe3e8 60%,#e1e4e9);border-top:1px solid #7f8a98;border-bottom:1px solid #9ea7b2"></div>
<div class="a" style="left:40px;top:219px;width:26px;height:435px;background:#e0e3e8;border-right:1px solid #9ea7b2"></div>
<svg class="a" style="left:49px;top:203px;" width="13" height="13" viewBox="0 0 13 13"><path d="M12 1V12H1Z" fill="#c6cad0"/></svg>
<div class="a" style="left:177px;top:199px;width:1px;height:19px;background:#a4adb8"></div>
<div class="t" style="left:66px;top:203px;width:111px;text-align:center;font-size:13px;color:#2a2a2a">A</div>
<div class="a" style="left:279px;top:199px;width:1px;height:19px;background:#a4adb8"></div>
<div class="t" style="left:178px;top:203px;width:101px;text-align:center;font-size:13px;color:#2a2a2a">B</div>
<div class="a" style="left:385px;top:199px;width:1px;height:19px;background:#a4adb8"></div>
<div class="t" style="left:280px;top:203px;width:105px;text-align:center;font-size:13px;color:#2a2a2a">C</div>
<div class="a" style="left:510px;top:199px;width:1px;height:19px;background:#a4adb8"></div>
<div class="t" style="left:386px;top:203px;width:124px;text-align:center;font-size:13px;color:#2a2a2a">D</div>
<div class="a" style="left:574px;top:199px;width:1px;height:19px;background:#a4adb8"></div>
<div class="t" style="left:511px;top:203px;width:63px;text-align:center;font-size:13px;color:#2a2a2a">E</div>
<div class="a" style="left:638px;top:199px;width:1px;height:19px;background:#a4adb8"></div>
<div class="t" style="left:575px;top:203px;width:63px;text-align:center;font-size:13px;color:#2a2a2a">F</div>
<div class="a" style="left:733px;top:199px;width:1px;height:19px;background:#a4adb8"></div>
<div class="t" style="left:639px;top:203px;width:94px;text-align:center;font-size:13px;color:#2a2a2a">G</div>
<div class="a" style="left:797px;top:199px;width:1px;height:19px;background:#a4adb8"></div>
<div class="t" style="left:734px;top:203px;width:63px;text-align:center;font-size:13px;color:#2a2a2a">H</div>
<div class="a" style="left:826px;top:199px;width:1px;height:19px;background:#a4adb8"></div>
<div class="a" style="left:65px;top:199px;width:1px;height:19px;background:#a4adb8"></div>
<div class="a" style="left:385px;top:198px;width:126px;height:21px;background:linear-gradient(180deg,#f9d98a,#ffd862 40%,#ffdc6c);border:1px solid #c29b3c"></div>
<div class="t" style="left:386px;top:203px;width:124px;text-align:center;font-size:13px;color:#2a2a2a">D</div>
<div class="a" style="left:40px;top:238px;width:26px;height:1px;background:#a4adb8"></div>
<div class="t" style="left:40px;top:223px;width:25px;text-align:center;font-size:13px;color:#2a2a2a">1</div>
<div class="a" style="left:40px;top:258px;width:26px;height:1px;background:#a4adb8"></div>
<div class="t" style="left:40px;top:243px;width:25px;text-align:center;font-size:13px;color:#2a2a2a">2</div>
<div class="a" style="left:40px;top:313px;width:26px;height:1px;background:#a4adb8"></div>
<div class="t" style="left:40px;top:298px;width:25px;text-align:center;font-size:13px;color:#2a2a2a">3</div>
<div class="a" style="left:40px;top:333px;width:26px;height:1px;background:#a4adb8"></div>
<div class="t" style="left:40px;top:318px;width:25px;text-align:center;font-size:13px;color:#2a2a2a">4</div>
<div class="a" style="left:40px;top:353px;width:26px;height:1px;background:#a4adb8"></div>
<div class="t" style="left:40px;top:338px;width:25px;text-align:center;font-size:13px;color:#2a2a2a">5</div>
<div class="a" style="left:40px;top:373px;width:26px;height:1px;background:#a4adb8"></div>
<div class="t" style="left:40px;top:358px;width:25px;text-align:center;font-size:13px;color:#2a2a2a">6</div>
<div class="a" style="left:40px;top:393px;width:26px;height:1px;background:#a4adb8"></div>
<div class="t" style="left:40px;top:378px;width:25px;text-align:center;font-size:13px;color:#2a2a2a">7</div>
<div class="a" style="left:40px;top:413px;width:26px;height:1px;background:#a4adb8"></div>
<div class="t" style="left:40px;top:398px;width:25px;text-align:center;font-size:13px;color:#2a2a2a">8</div>
<div class="a" style="left:40px;top:433px;width:26px;height:1px;background:#a4adb8"></div>
<div class="t" style="left:40px;top:418px;width:25px;text-align:center;font-size:13px;color:#2a2a2a">9</div>
<div class="a" style="left:40px;top:453px;width:26px;height:1px;background:#a4adb8"></div>
<div class="t" style="left:40px;top:438px;width:25px;text-align:center;font-size:13px;color:#2a2a2a">10</div>
<div class="a" style="left:40px;top:473px;width:26px;height:1px;background:#a4adb8"></div>
<div class="t" style="left:40px;top:458px;width:25px;text-align:center;font-size:13px;color:#2a2a2a">11</div>
<div class="a" style="left:40px;top:493px;width:26px;height:1px;background:#a4adb8"></div>
<div class="t" style="left:40px;top:478px;width:25px;text-align:center;font-size:13px;color:#2a2a2a">12</div>
<div class="a" style="left:40px;top:513px;width:26px;height:1px;background:#a4adb8"></div>
<div class="t" style="left:40px;top:498px;width:25px;text-align:center;font-size:13px;color:#2a2a2a">13</div>
<div class="a" style="left:40px;top:533px;width:26px;height:1px;background:#a4adb8"></div>
<div class="t" style="left:40px;top:518px;width:25px;text-align:center;font-size:13px;color:#2a2a2a">14</div>
<div class="a" style="left:40px;top:553px;width:26px;height:1px;background:#a4adb8"></div>
<div class="t" style="left:40px;top:538px;width:25px;text-align:center;font-size:13px;color:#2a2a2a">15</div>
<div class="a" style="left:40px;top:573px;width:26px;height:1px;background:#a4adb8"></div>
<div class="t" style="left:40px;top:558px;width:25px;text-align:center;font-size:13px;color:#2a2a2a">16</div>
<div class="a" style="left:40px;top:593px;width:26px;height:1px;background:#a4adb8"></div>
<div class="t" style="left:40px;top:578px;width:25px;text-align:center;font-size:13px;color:#2a2a2a">17</div>
<div class="a" style="left:40px;top:613px;width:26px;height:1px;background:#a4adb8"></div>
<div class="t" style="left:40px;top:598px;width:25px;text-align:center;font-size:13px;color:#2a2a2a">18</div>
<div class="a" style="left:40px;top:633px;width:26px;height:1px;background:#a4adb8"></div>
<div class="t" style="left:40px;top:618px;width:25px;text-align:center;font-size:13px;color:#2a2a2a">19</div>
<div class="a" style="left:40px;top:653px;width:26px;height:1px;background:#a4adb8"></div>
<div class="t" style="left:40px;top:638px;width:25px;text-align:center;font-size:13px;color:#2a2a2a">20</div>
<div class="a" style="left:66px;top:219px;width:760px;height:435px;background:#fff"></div>
<div class="a" style="left:177px;top:219px;width:1px;height:435px;background:#dadcdd"></div>
<div class="a" style="left:279px;top:219px;width:1px;height:435px;background:#dadcdd"></div>
<div class="a" style="left:385px;top:219px;width:1px;height:435px;background:#dadcdd"></div>
<div class="a" style="left:510px;top:219px;width:1px;height:435px;background:#dadcdd"></div>
<div class="a" style="left:574px;top:219px;width:1px;height:435px;background:#dadcdd"></div>
<div class="a" style="left:638px;top:219px;width:1px;height:435px;background:#dadcdd"></div>
<div class="a" style="left:733px;top:219px;width:1px;height:435px;background:#dadcdd"></div>
<div class="a" style="left:797px;top:219px;width:1px;height:435px;background:#dadcdd"></div>
<div class="a" style="left:66px;top:238px;width:760px;height:1px;background:#dadcdd"></div>
<div class="a" style="left:66px;top:258px;width:760px;height:1px;background:#dadcdd"></div>
<div class="a" style="left:66px;top:313px;width:760px;height:1px;background:#dadcdd"></div>
<div class="a" style="left:66px;top:333px;width:760px;height:1px;background:#dadcdd"></div>
<div class="a" style="left:66px;top:353px;width:760px;height:1px;background:#dadcdd"></div>
<div class="a" style="left:66px;top:373px;width:760px;height:1px;background:#dadcdd"></div>
<div class="a" style="left:66px;top:393px;width:760px;height:1px;background:#dadcdd"></div>
<div class="a" style="left:66px;top:413px;width:760px;height:1px;background:#dadcdd"></div>
<div class="a" style="left:66px;top:433px;width:760px;height:1px;background:#dadcdd"></div>
<div class="a" style="left:66px;top:453px;width:760px;height:1px;background:#dadcdd"></div>
<div class="a" style="left:66px;top:473px;width:760px;height:1px;background:#dadcdd"></div>
<div class="a" style="left:66px;top:493px;width:760px;height:1px;background:#dadcdd"></div>
<div class="a" style="left:66px;top:513px;width:760px;height:1px;background:#dadcdd"></div>
<div class="a" style="left:66px;top:533px;width:760px;height:1px;background:#dadcdd"></div>
<div class="a" style="left:66px;top:553px;width:760px;height:1px;background:#dadcdd"></div>
<div class="a" style="left:66px;top:573px;width:760px;height:1px;background:#dadcdd"></div>
<div class="a" style="left:66px;top:593px;width:760px;height:1px;background:#dadcdd"></div>
<div class="a" style="left:66px;top:613px;width:760px;height:1px;background:#dadcdd"></div>
<div class="a" style="left:66px;top:633px;width:760px;height:1px;background:#dadcdd"></div>
<div class="a" style="left:66px;top:653px;width:760px;height:1px;background:#dadcdd"></div>
<div class="a" style="left:66px;top:259px;width:444px;height:54px;background:#604a7b"></div>
<div class="a" style="left:66px;top:314px;width:111px;height:119px;background:#92d050"></div>
<div class="a" style="left:638px;top:259px;width:95px;height:54px;background:#ffc000"></div>
<div class="a" style="left:177px;top:258px;width:1px;height:176px;background:#000"></div>
<div class="a" style="left:279px;top:258px;width:1px;height:176px;background:#000"></div>
<div class="a" style="left:385px;top:258px;width:1px;height:176px;background:#000"></div>
<div class="a" style="left:510px;top:258px;width:1px;height:176px;background:#000"></div>
<div class="a" style="left:65px;top:258px;width:446px;height:1px;background:#000"></div>
<div class="a" style="left:65px;top:313px;width:446px;height:1px;background:#000"></div>
<div class="a" style="left:65px;top:333px;width:446px;height:1px;background:#000"></div>
<div class="a" style="left:65px;top:353px;width:446px;height:1px;background:#000"></div>
<div class="a" style="left:65px;top:373px;width:446px;height:1px;background:#000"></div>
<div class="a" style="left:65px;top:393px;width:446px;height:1px;background:#000"></div>
<div class="a" style="left:65px;top:413px;width:446px;height:1px;background:#000"></div>
<div class="a" style="left:65px;top:433px;width:446px;height:1px;background:#000"></div>
<div class="t" style="left:66px;top:298px;width:111px;text-align:center;font-size:13px;font-weight:bold;color:#fff;letter-spacing:0px">Имя</div>
<div class="t" style="left:178px;top:298px;width:101px;text-align:center;font-size:13px;font-weight:bold;color:#fff;letter-spacing:0px">Дата</div>
<div class="t" style="left:280px;top:298px;width:105px;text-align:center;font-size:13px;font-weight:bold;color:#fff;letter-spacing:-0.3px">Ставка, руб.</div>
<div class="t" style="left:386px;top:298px;width:124px;text-align:center;font-size:13px;font-weight:bold;color:#fff;letter-spacing:-0.25px">Заработная плата</div>
<div class="t" style="left:69px;top:318px;font-size:13px;color:#000;letter-spacing:0.3px">Николаев А. Д.</div>
<div class="t" style="left:178px;top:318px;width:101px;text-align:center;font-size:13px;color:#000;letter-spacing:0px">25.05.2016</div>
<div class="t" style="left:280px;top:318px;width:105px;text-align:center;font-size:13px;color:#000;letter-spacing:0px">11911</div>
<div class="t" style="left:69px;top:338px;font-size:13px;color:#000;letter-spacing:-0.1px">Сафронова В. М.</div>
<div class="t" style="left:178px;top:338px;width:101px;text-align:center;font-size:13px;color:#000;letter-spacing:0px">25.05.2016</div>
<div class="t" style="left:280px;top:338px;width:105px;text-align:center;font-size:13px;color:#000;letter-spacing:0px">11755</div>
<div class="t" style="left:69px;top:358px;font-size:13px;color:#000;letter-spacing:0.05px">Коваль Л. П.</div>
<div class="t" style="left:178px;top:358px;width:101px;text-align:center;font-size:13px;color:#000;letter-spacing:0px">25.05.2016</div>
<div class="t" style="left:280px;top:358px;width:105px;text-align:center;font-size:13px;color:#000;letter-spacing:0px">11068</div>
<div class="t" style="left:69px;top:378px;font-size:13px;color:#000;letter-spacing:0.1px">Парфенов Д. Ф.</div>
<div class="t" style="left:178px;top:378px;width:101px;text-align:center;font-size:13px;color:#000;letter-spacing:0px">25.05.2016</div>
<div class="t" style="left:280px;top:378px;width:105px;text-align:center;font-size:13px;color:#000;letter-spacing:0px">11850</div>
<div class="t" style="left:69px;top:398px;font-size:13px;color:#000;letter-spacing:0.13px">Петров Ф. Л.</div>
<div class="t" style="left:178px;top:398px;width:101px;text-align:center;font-size:13px;color:#000;letter-spacing:0px">25.05.2016</div>
<div class="t" style="left:280px;top:398px;width:105px;text-align:center;font-size:13px;color:#000;letter-spacing:0px">11900</div>
<div class="t" style="left:69px;top:418px;font-size:13px;color:#000;letter-spacing:0.25px">Попова М. Д.</div>
<div class="t" style="left:178px;top:418px;width:101px;text-align:center;font-size:13px;color:#000;letter-spacing:0px">25.05.2016</div>
<div class="t" style="left:280px;top:418px;width:105px;text-align:center;font-size:13px;color:#000;letter-spacing:0px">11987</div>
<div class="t" style="left:386px;top:318px;width:124px;text-align:center;font-size:13px;color:#000;letter-spacing:0px">15252,97</div>
<div class="t" style="left:641px;top:243px;font-size:13px;color:#000;letter-spacing:0.2px">Коэффициент</div>
<div class="t" style="left:730px;top:298px;font-size:13px;color:#000;transform:translateX(-100%);letter-spacing:-0.25px">1,280578366</div>
<div class="a" style="left:385px;top:313px;width:126px;height:21px;border:2px solid #000;border-top-width:1px;border-bottom-width:1px"></div>
<div class="a" style="left:386px;top:314px;width:1px;height:19px;background:#000"></div>
<div class="a" style="left:386px;top:335px;width:122px;height:1px;background:#000"></div>
<div class="a" style="left:507px;top:330px;width:6px;height:7px;background:#000;border:1px solid #fff"></div>
<div class="a" style="left:40px;top:313px;width:26px;height:21px;background:linear-gradient(180deg,#fbdc7e,#ffd85e);border:1px solid #c29b3c"></div>
<div class="t" style="left:40px;top:318px;width:25px;text-align:center;font-size:13px;color:#2a2a2a">4</div>
<div class="a" style="left:826px;top:198px;width:16px;height:456px;background:linear-gradient(90deg,#e3e6ea,#eef0f3 50%,#e6e9ed);border-left:1px solid #d0d5db"></div>
<div class="a" style="left:827px;top:200px;width:14px;height:7px;background:#fff;border:1px solid #8d97a3"></div>
<div class="a" style="left:830px;top:203px;width:8px;height:1px;background:#6c7581"></div>
<svg class="a" style="left:829px;top:212px;" width="10" height="6" viewBox="0 0 10 6"><path d="M0 5.5H10L5 0.5Z" fill="#3b3f46"/></svg>
<div class="a" style="left:827px;top:224px;width:14px;height:392px;border:1px solid #9aa3ae;border-radius:2px;background:linear-gradient(90deg,#dfe3e8,#f4f6f8 40%,#eceff2 70%,#d9dde3)"></div>
<svg class="a" style="left:830px;top:416px;" width="8" height="6" viewBox="0 0 8 6"><path d="M0 0.5H8M0 2.5H8M0 4.5H8" stroke="#7b8490"/></svg>
<svg class="a" style="left:829px;top:643px;" width="10" height="6" viewBox="0 0 10 6"><path d="M0 0.5H10L5 5.5Z" fill="#3b3f46"/></svg>
<div class="a" style="left:40px;top:654px;width:786px;height:16px;background:linear-gradient(180deg,#dde2e8,#e8ebef);border-top:1px solid #8e96a0"></div>
<svg class="a" style="left:46px;top:658px;" width="6" height="9" viewBox="0 0 6 9"><rect x="0" y="0.5" width="1.4" height="8" fill="#333"/><path d="M6 0.5V8.5L2 4.5Z" fill="#333"/></svg>
<svg class="a" style="left:61px;top:658px;" width="5" height="9" viewBox="0 0 5 9"><path d="M5 0.5V8.5L1 4.5Z" fill="#333"/></svg>
<svg class="a" style="left:75px;top:658px;" width="5" height="9" viewBox="0 0 5 9"><path d="M0 0.5V8.5L4 4.5Z" fill="#333"/></svg>
<svg class="a" style="left:89px;top:658px;" width="6" height="9" viewBox="0 0 6 9"><path d="M0 0.5V8.5L4 4.5Z" fill="#333"/><rect x="4.6" y="0.5" width="1.4" height="8" fill="#333"/></svg>
<div class="a" style="left:102px;top:655px;width:1px;height:15px;background:#8e96a0"></div>
<svg class="a" style="left:104px;top:655px;" width="420" height="15" viewBox="0 0 420 15"><defs><linearGradient id="tg" x1="0" y1="0" x2="0" y2="1"><stop offset="0" stop-color="#dce2e9"/><stop offset="1" stop-color="#e9edf2"/></linearGradient></defs><rect x="0" y="0" width="420" height="15" fill="url(#tg)"/><path d="M6 15L18 1.5" stroke="#6f7986" stroke-width="1.1" fill="none"/><path d="M5 15L9 11V15Z" fill="#f4f6f8"/><path d="M59 15L71 1.5" stroke="#6f7986" stroke-width="1.1" fill="none"/><path d="M58 15L62 11V15Z" fill="#f4f6f8"/><path d="M112 15L124 1.5" stroke="#6f7986" stroke-width="1.1" fill="none"/><path d="M111 15L115 11V15Z" fill="#f4f6f8"/><path d="M174 15L186 1.5" stroke="#6f7986" stroke-width="1.1" fill="none"/><path d="M173 15L177 11V15Z" fill="#f4f6f8"/><path d="M237 15L249 1.5" stroke="#6f7986" stroke-width="1.1" fill="none"/><path d="M236 15L240 11V15Z" fill="#f4f6f8"/><path d="M380 15L392 1.5" stroke="#6f7986" stroke-width="1.1" fill="none"/><path d="M379 15L383 11V15Z" fill="#f4f6f8"/></svg>
<div class="a" style="left:104px;top:654px;width:410px;height:1px;background:#8e96a0"></div>
<div class="t" style="left:123px;top:658px;font-size:12px;color:#2a2a2a;letter-spacing:0.3px">Лист8</div>
<div class="t" style="left:176px;top:658px;font-size:12px;color:#2a2a2a;letter-spacing:0.3px">Лист9</div>
<div class="t" style="left:229px;top:658px;font-size:12px;color:#2a2a2a;letter-spacing:0.3px">Лист10</div>
<div class="t" style="left:291px;top:658px;font-size:12px;color:#2a2a2a;letter-spacing:0.3px">Лист11</div>
<div class="t" style="left:354px;top:658px;font-size:12px;color:#2a2a2a;letter-spacing:0px">Диаграмма1</div>
<div class="t" style="left:497px;top:658px;font-size:12px;color:#2a2a2a;letter-spacing:0.3px">Ли</div>
<div class="a" style="left:104px;top:669px;width:410px;height:1px;background:#a3abb5"></div>
<svg class="a" style="left:433px;top:654px;" width="66" height="16" viewBox="0 0 66 16"><path d="M1.5 0H65L51.5 15H1.5Z" fill="#fff"/><path d="M65 0.5L51.5 15" stroke="#7a8694" fill="none"/><path d="M1.5 0.5V15" stroke="#9aa3ae" fill="none"/></svg>
<div class="t" style="left:444px;top:658px;font-size:12px;font-weight:bold;color:#111;letter-spacing:0.1px">Лист1</div>
<div class="a" style="left:512px;top:656px;width:7px;height:13px;background:#fff;border:1px solid #8e98a4"></div>
<div class="a" style="left:515px;top:659px;width:1px;height:7px;background:#6c7581"></div>
<svg class="a" style="left:525px;top:658px;" width="5" height="9" viewBox="0 0 5 9"><path d="M5 0.5V8.5L1 4.5Z" fill="#333"/></svg>
<div class="a" style="left:538px;top:655px;width:230px;height:14px;border:1px solid #9aa3ae;border-radius:2px;background:linear-gradient(180deg,#eef1f4,#f7f8fa 40%,#e8ebef 60%,#dde1e6)"></div>
<svg class="a" style="left:648px;top:658px;" width="8" height="8" viewBox="0 0 8 8"><path d="M0.5 0V8M2.5 0V8M4.5 0V8M6.5 0V8" stroke="#7b8490"/></svg>
<svg class="a" style="left:808px;top:658px;" width="5" height="9" viewBox="0 0 5 9"><path d="M0 0.5V8.5L4 4.5Z" fill="#333"/></svg>
<div class="a" style="left:819px;top:656px;width:7px;height:13px;background:#fff;border:1px solid #8e98a4"></div>
<div class="a" style="left:822px;top:659px;width:1px;height:7px;background:#6c7581"></div>
<div class="a" style="left:826px;top:654px;width:16px;height:16px;background:#e6e9ed"></div>
<div class="a" style="left:40px;top:670px;width:802px;height:24px;background:linear-gradient(180deg,#f4f6f8 0%,#e7eaee 45%,#d9dde2 100%);border-top:1px solid #c4cad2;border-bottom:1px solid #707a86"></div>
<div class="t" style="left:48px;top:677px;font-size:12px;color:#262626">Готово</div>
<div class="a" style="left:96px;top:672px;width:1px;height:20px;background:#b2b9c2"></div>
<svg class="a" style="left:106px;top:674px;" width="16" height="15" viewBox="0 0 16 15"><rect x="1.5" y="3.5" width="13" height="11" fill="#fff" stroke="#5a6a82"/><rect x="2" y="4" width="12" height="2.5" fill="#4f7fcc"/><path d="M2 9.5H14M2 12H14M6 7V14M10 7V14" stroke="#8aa0c0"/><circle cx="4" cy="3.5" r="3" fill="#e8562a"/></svg>
<div class="a" style="left:130px;top:672px;width:1px;height:20px;background:#b2b9c2"></div>
<div class="a" style="left:585px;top:672px;width:1px;height:20px;background:#b2b9c2"></div>
<div class="a" style="left:590px;top:674px;width:20px;height:18px;background:linear-gradient(180deg,#fde9a2,#fbd566);border:1px solid #d6ab4c;border-radius:2px"></div>
<svg class="a" style="left:594px;top:677px;" width="12" height="11" viewBox="0 0 12 11"><rect x="0.5" y="0.5" width="11" height="10" fill="#fff" stroke="#555"/><path d="M0.5 3.5H11.5M0.5 6.5H11.5M4.5 0.5V10.5M7.5 0.5V10.5" stroke="#555"/></svg>
<svg class="a" style="left:611px;top:676px;" width="14" height="14" viewBox="0 0 14 14"><rect x="0.5" y="0.5" width="13" height="13" fill="#f3f4f6" stroke="#6b737e"/><rect x="3.5" y="3.5" width="7" height="7" fill="#fff" stroke="#6b737e"/><path d="M5 5.5H9M5 7.5H9" stroke="#999"/></svg>
<svg class="a" style="left:630px;top:676px;" width="14" height="14" viewBox="0 0 14 14"><rect x="0.5" y="0.5" width="13" height="13" fill="#f3f4f6" stroke="#6b737e"/><path d="M5.5 0.5V9.5M0.5 9.5H13.5" stroke="#6b737e"/><rect x="1" y="1" width="4" height="8" fill="#fff"/><rect x="6" y="1" width="7" height="8" fill="#b8bec6"/></svg>
<div class="t" style="left:655px;top:678px;font-size:11px;color:#262626">100%</div>
<svg class="a" style="left:690px;top:674px;" width="18" height="18" viewBox="0 0 18 18"><circle cx="9" cy="9" r="8" fill="url(#zg)" stroke="#7d8896"/><defs><radialGradient id="zg" cx=".5" cy=".3" r=".7"><stop offset="0" stop-color="#fff"/><stop offset="1" stop-color="#dfe3e8"/></radialGradient></defs><rect x="5" y="8" width="8" height="2" fill="#333"/></svg>
<div class="a" style="left:708px;top:682px;width:98px;height:1px;background:#8d96a2"></div>
<div class="a" style="left:708px;top:683px;width:98px;height:1px;background:#fff"></div>
<svg class="a" style="left:753px;top:674px;" width="10" height="15" viewBox="0 0 10 15"><path d="M0.5 0.5H9.5V9.5L5 14 0.5 9.5Z" fill="#fbfcfd" stroke="#69737f"/></svg>
<svg class="a" style="left:806px;top:674px;" width="18" height="18" viewBox="0 0 18 18"><circle cx="9" cy="9" r="8" fill="url(#zg)" stroke="#7d8896"/><rect x="5" y="8" width="8" height="2" fill="#333"/><rect x="8" y="5" width="2" height="8" fill="#333"/></svg>
<svg class="a" style="left:832px;top:682px;" width="9" height="9" viewBox="0 0 9 9"><rect x="6" y="0" width="2" height="2" fill="#a0a8b2"/><rect x="3" y="3" width="2" height="2" fill="#a0a8b2"/><rect x="6" y="3" width="2" height="2" fill="#a0a8b2"/><rect x="0" y="6" width="2" height="2" fill="#a0a8b2"/><rect x="3" y="6" width="2" height="2" fill="#a0a8b2"/><rect x="6" y="6" width="2" height="2" fill="#a0a8b2"/></svg>
<div class="a" style="left:283px;top:167px;width:114px;height:35px;border:5px solid #f00;border-radius:12px;box-shadow:2px 3px 5px rgba(0,0,0,.4), inset 3px 4px 5px rgba(0,0,0,.4)"></div>
<div class="a" style="left:381px;top:311px;width:135px;height:34px;border:5px solid #f00;border-radius:12px;box-shadow:2px 3px 5px rgba(0,0,0,.4), inset 3px 4px 5px rgba(0,0,0,.4)"></div>
</body></html>
